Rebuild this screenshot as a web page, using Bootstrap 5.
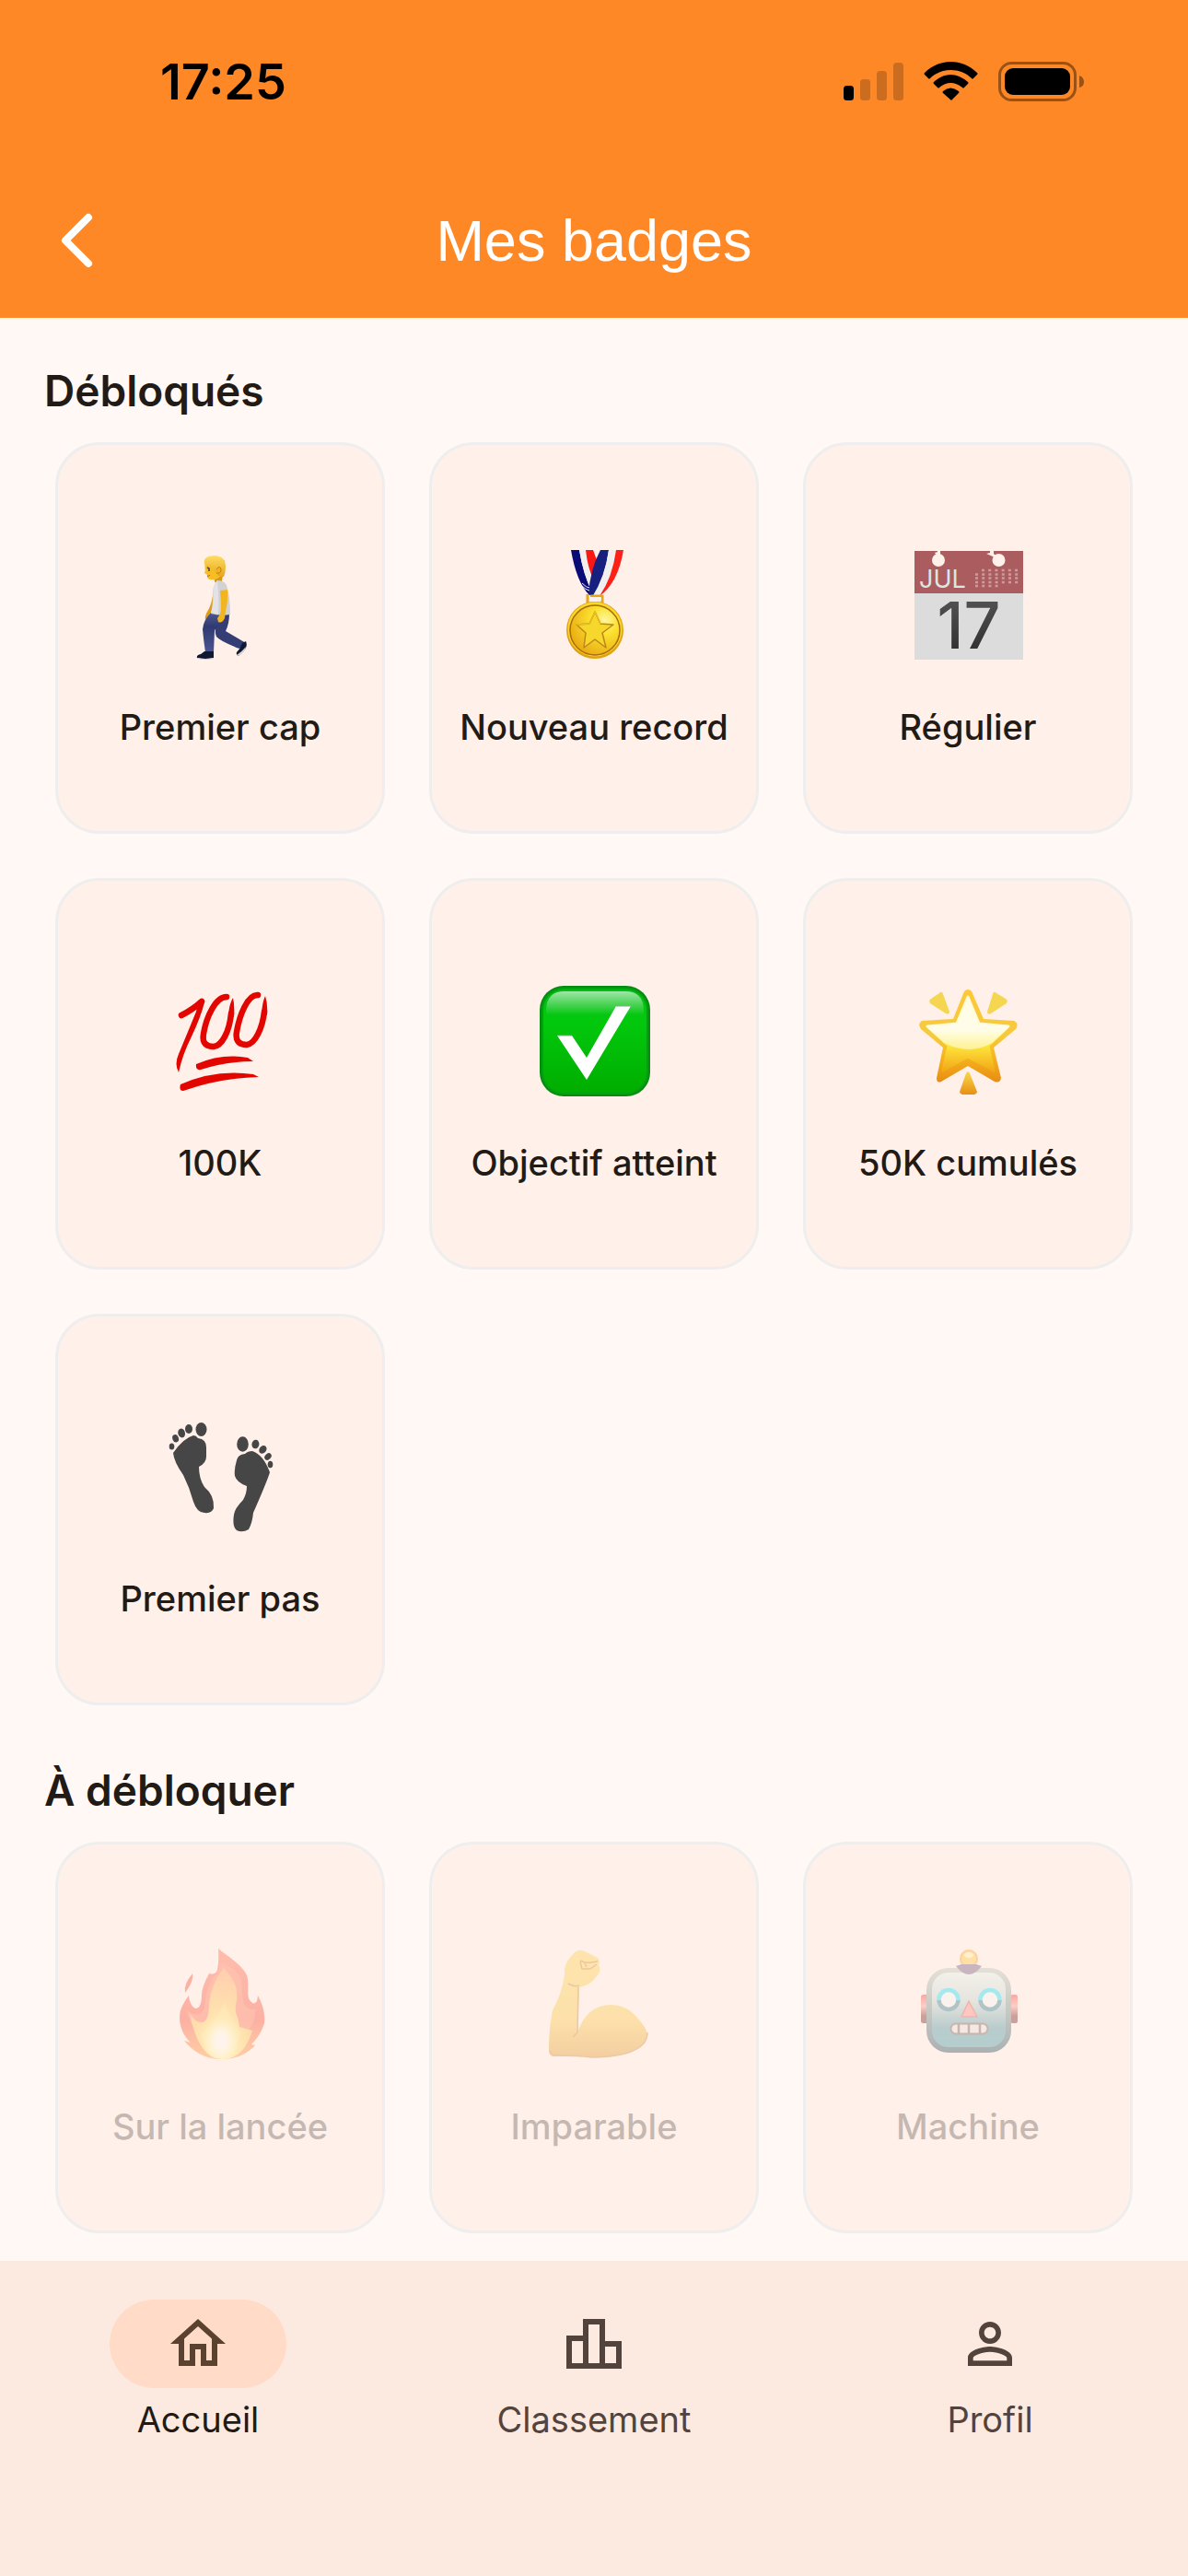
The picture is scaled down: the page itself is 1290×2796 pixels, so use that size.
<!DOCTYPE html>
<html lang="fr">
<head>
<meta charset="utf-8">
<meta name="viewport" content="width=device-width, initial-scale=1">
<title>Mes badges</title>
<link href="https://cdn.jsdelivr.net/npm/bootstrap@5.3.0/dist/css/bootstrap.min.css" rel="stylesheet">
<style>
  body { background: #fff8f5; color: #221a14; font-family: Inter, "Liberation Sans", sans-serif; }
  .top-zone { background: #ff8826; }
  .status-row { height: 177px; padding: 0 112px 0 174px; }
  .clock { font-size: 54px; font-weight: 600; line-height: 60px; color: #000; }
  .app-row { height: 168px; display: grid; grid-template-columns: 168px 1fr 168px; align-items: center; }
  .app-title { font-family: "Liberation Sans", sans-serif; font-size: 63px; font-weight: 400; line-height: 84px; color: #fff; }
  .back-btn { width: 168px; height: 168px; }
  .badge-section { padding: 51px 60px 0; }
  .badge-section + .badge-section { padding-top: 64px; }
  .section-title { font-size: 46px; font-weight: 600; line-height: 56px; margin: 0 0 28px -12px; }
  .badge-grid { --bs-gutter-x: 48px; --bs-gutter-y: 48px; }
  .badge-tile { aspect-ratio: 358 / 425; background: #fff0e9; border: 3px solid #eee; border-radius: 48px; padding-top: 114px; gap: 48px; }
  .badge-tile svg { width: 120px; height: 120px; overflow: visible; flex: none; }
  .badge-label { font-size: 38px; font-weight: 500; line-height: 48px; white-space: nowrap; }
  .locked svg { opacity: .38; }
  .locked .badge-label { opacity: .26; }
  .tab-bar { background: #fceae1; height: 342px; padding-top: 42px; }
  .tab-link { color: #52443c; font-size: 38px; font-weight: 400; line-height: 48px; gap: 10px; }
  .tab-link.active { color: #221a14; }
  .tab-pill { width: 192px; height: 96px; border-radius: 48px; }
  .active .tab-pill { background: #ffdbc8; color: #5b4130; }
  .tab-pill svg { width: 72px; height: 72px; fill: currentColor; }
</style>
</head>
<body class="d-flex flex-column min-vh-100">

<header class="top-zone">
  <div class="status-row d-flex justify-content-between align-items-center">
    <span class="clock">17:25</span>
    <svg width="266" height="46" viewBox="0 0 266 46" aria-hidden="true">
      <rect x="4" y="27" width="11" height="16" rx="3.500"/>
      <g fill-opacity=".2"><rect x="22" y="20" width="11" height="23" rx="3.500"/><rect x="40" y="11" width="11" height="32" rx="3.500"/><rect x="58" y="2" width="11" height="41" rx="3.500"/></g>
      <path d="M92 13C108-3 133-3 149 13q1 1 0 2l-4 4q-1 1-2 0C131 7 110 7 98 19q-1 1-2 0l-4-4q-1-1 0-2ZM102 23q18-16 37 0 1 1 0 2l-4 4q-1 1-2 0-13-10-25 0-1 1-2 0l-4-4q-1-1 0-2ZM112 33q8-7 17 0 1 1 0 2l-8 8-9-8q-1-1 0-2Z"/>
      <rect x="173.500" y="2.500" width="82" height="40" rx="13" fill="none" stroke="#000" stroke-opacity=".4" stroke-width="3"/>
      <rect x="179" y="8" width="71" height="29" rx="9"/>
      <path d="M260 16q5 2 5 7t-5 6Z" fill-opacity=".4"/>
    </svg>
  </div>
  <div class="app-row">
    <button type="button" class="back-btn btn border-0 p-0" aria-label="Retour">
      <svg width="168" height="168" viewBox="0 0 168 168" fill="none" stroke="#fff" stroke-width="8" stroke-linecap="round" stroke-linejoin="round" aria-hidden="true"><path d="M96 59 71 84 96 109"/></svg>
    </button>
    <h1 class="app-title text-center mb-0">Mes badges</h1>
  </div>
</header>

<main class="flex-grow-1">
  <section class="badge-section">
    <h2 class="section-title">Débloqués</h2>
    <div class="row row-cols-3 badge-grid">
      <div class="col"><div class="badge-tile d-flex flex-column align-items-center">
        <svg viewBox="0 0 120 120" aria-hidden="true">
          <defs>
            <linearGradient id="jean" x1="0" x2="0" y1="0" y2="1"><stop stop-color="#4c5a93"/><stop offset=".35" stop-color="#303a70"/><stop offset="1" stop-color="#4c5590"/></linearGradient>
            <linearGradient id="hair" x1="0" x2="0" y1="0" y2="1"><stop stop-color="#ffdd61"/><stop offset="1" stop-color="#e5a51a"/></linearGradient>
          </defs>
          <path d="M52 50q-2 11-6 17-3 5-2 9l3-1q4-9 8-14Z" fill="#e29c12"/>
          <path d="M55 69 70 69Q70 80 66 88L88 101 81 107Q60 99 56 94 53 86 57 78Z" fill="#343e74"/>
          <path d="M50 68 63 69Q60 81 54 87L53 111 44 111Q42 98 41 86 42 76 50 68Z" fill="url(#jean)"/>
          <path d="M43 110h10v7q-9 2-18 0-1-3 4-4ZM84 101l4-2q2 5-1 9l-7 7q-3-1-2-4 4-4 6-10Z" fill="#101934"/>
          <path d="M35 117q9 2 18 0v1q-9 2-18 0ZM88 105q-1 6-8 10l-2-1q6-4 10-9Z" fill="#d9d4cf"/>
          <path d="M54 27h9l-1 7q-5 5-8 0Z" fill="#d59a12"/>
          <path d="M57 33q7 0 10 5 4 13 4 32-10 2-21-1 2-8 2-17-1-13 5-19Z" fill="#d2d2d5"/>
          <path d="M57 33q-6 8-4 18-1 11-3 17l8 2q1-20-1-37Z" fill="#e3e3e6"/>
          <path d="M60 44l8-1q1 12-2 23l-1 8q-3 6-7 4l-1-4q3-3 4-9 0-12-1-21Z" fill="#f3b51d"/>
          <path d="M44 13q-1 6 0 9l-1 3 3 2q-1 4 3 5 4 1 8-1l8-6V11Z" fill="#f8bd25"/>
          <path d="M43 15Q41 6 55 6q11 1 11 12 0 6-2 11l-6-1-6-8q-2-4-5-4-3 1-4-1Z" fill="url(#hair)"/>
          <path d="M56 21q4-5 5 0 0 5-5 4" fill="#f2b221" stroke="#bc810e" stroke-width="1"/><path d="m46 19 2 1v3" fill="none" stroke="#40484e" stroke-width="1.600"/><path d="M46 28q2 1 3-1" fill="none" stroke="#a66811"/>
        </svg>
        <span class="badge-label">Premier cap</span></div></div>

      <div class="col"><div class="badge-tile d-flex flex-column align-items-center">
        <svg viewBox="0 0 120 120" aria-hidden="true">
          <defs><radialGradient id="gold" cx=".7" cy=".3" r=".8"><stop stop-color="#fff6a0"/><stop offset=".35" stop-color="#fbe22f"/><stop offset="1" stop-color="#e8a712"/></radialGradient></defs>
          <path d="M35 0h9q4 26 14 46l-3 3Q41 35 35 0Z" fill="#0b0b78"/><path d="M44 0h7q4 22 12 34l-5 12Q48 25 44 0Z" fill="#f1f0ee"/><path d="M51 0h8q3 10 8 18l-6 18Q53 20 51 0Z" fill="#fb1714"/>
          <path d="M67 0h9q-4 30-17 51l-5-3Q56 20 67 0Z" fill="#18207f"/><path d="M76 0h8q-4 33-19 51h-7Q72 29 76 0Z" fill="#f1f0ee"/><path d="M84 0h8Q86 36 66 50 80 30 84 0Z" fill="#fc2019"/>
          <path d="M47 36q5 5 8 5M47 39q4 4 8 5" fill="none" stroke="#f5f3ef" stroke-width="1"/>
          <path d="M53 48v10h16V50H56" fill="none" stroke="#e6a51a" stroke-width="3"/><rect x="56" y="51" width="12" height="4" rx="1" fill="#fff0e9"/>
          <circle cx="61" cy="87" r="31" fill="#e1a116"/><circle cx="61" cy="86" r="29.500" fill="#f8d928"/><circle cx="61" cy="87" r="27" fill="url(#gold)" stroke="#a96a10" stroke-width="1.500"/>
          <path d="m61 67 6 13 14 1-12 9 4 16-12-9-12 9 2-16-10-9 14-1Z" fill="#f6d72b" stroke="#bf861a" stroke-width="1.500" stroke-linejoin="round"/>
          <path d="m41 81 14-1 6-13 6 13" fill="none" stroke="#e9bd24" stroke-width="1.500"/>
        </svg>
        <span class="badge-label">Nouveau record</span></div></div>

      <div class="col"><div class="badge-tile d-flex flex-column align-items-center">
        <svg viewBox="0 0 120 120" aria-hidden="true">
          <defs><linearGradient id="ink" x1="0" x2="0" y1="0" y2="1"><stop stop-color="#5a5a5a"/><stop offset="1" stop-color="#292929"/></linearGradient></defs>
          <path d="M2 1h118v118H2Z" fill="#dcdcdc"/><path d="M2 1h118v46H2Z" fill="#ab5c5e"/>
          <g fill="#fff0e9"><circle cx="28" cy="11" r="7"/><circle cx="93.500" cy="11" r="7"/><path d="M27 1h3v5h-4l-2-3 3-1ZM84 1h4v3l4 4-5-1-7-3 4-1Z"/></g>
          <text x="7" y="41" font-size="27" font-weight="400" fill="#dfe4e8">JUL</text>
          <g stroke="#d09a9a" stroke-width="2.500" stroke-dasharray="3 4.200" fill="none"><path d="M75 22h41M68 26.500h48M68 30.500h48M68 35h48M68 39h25"/></g>
          <text x="61" y="107" font-size="70" font-weight="500" text-anchor="middle" fill="url(#ink)">17</text>
        </svg>
        <span class="badge-label">Régulier</span></div></div>

      <div class="col"><div class="badge-tile d-flex flex-column align-items-center">
        <svg viewBox="0 0 120 120" aria-hidden="true">
          <g fill="none" stroke="#e20500" stroke-linecap="round" stroke-linejoin="round">
            <path d="M18 32Q30 26 40 17" stroke-width="6.500"/>
            <path d="M67 12C55 12 45 34 42 52 40 63 46 66 53 66 62 65 70 50 72 30" stroke-width="6.500"/>
            <path d="M101 10C90 9 81 32 78 50 76 61 82 64 89 64 98 63 106 46 108 28" stroke-width="6.500"/>
          </g>
          <path d="M36 16q7-4 7 2Q39 34 29 55 19 75 15 94 10 85 15 74 25 50 34 28ZM69 32q1-13 5-19 2 9 1 21ZM105 30q1-13 4-19 3 9 2 21ZM34 85q28-12 56-7l6 4q-30 0-57 9-6 1-5-6ZM17 107q38-17 79-11l6 3q-42 1-82 15-5 0-3-7Z" fill="#e20500"/>
        </svg>
        <span class="badge-label">100K</span></div></div>

      <div class="col"><div class="badge-tile d-flex flex-column align-items-center">
        <svg viewBox="0 0 120 120" aria-hidden="true">
          <defs>
            <linearGradient id="green" x1="0" x2="0" y1="0" y2="1"><stop stop-color="#02bd16"/><stop offset=".3" stop-color="#02c90d"/><stop offset="1" stop-color="#00ad00"/></linearGradient>
            <linearGradient id="gloss" x1="0" x2="0" y1="0" y2="1"><stop stop-color="#fff" stop-opacity=".62"/><stop offset="1" stop-color="#fff" stop-opacity="0"/></linearGradient>
          </defs>
          <rect x="1" width="120" height="120" rx="26" fill="#078c12"/><rect x="3" y="2" width="116" height="116" rx="24" fill="#04a010"/><rect x="5" y="4" width="112" height="112" rx="22" fill="url(#green)"/>
          <path d="M8 32V27Q8 6 28 6H94q20 0 20 21v5Z" fill="url(#gloss)"/>
          <path d="M20 54h16l16 24 32-56h16L52 102Z" fill="#fff"/><path d="M20 54h16M84 22h16" stroke="#8dab8d" stroke-width="1"/>
        </svg>
        <span class="badge-label">Objectif atteint</span></div></div>

      <div class="col"><div class="badge-tile d-flex flex-column align-items-center">
        <svg viewBox="0 0 120 120" aria-hidden="true">
          <defs>
            <linearGradient id="sun" x1="0" x2="0" y1="0" y2="1"><stop stop-color="#ffc735"/><stop offset=".5" stop-color="#f5ca3f"/><stop offset=".7" stop-color="#f7b820"/><stop offset="1" stop-color="#e88d12"/></linearGradient>
            <linearGradient id="core" x1="0" x2="0" y1="0" y2="1"><stop stop-color="#fff9cd"/><stop offset=".45" stop-color="#fffbd8"/><stop offset=".65" stop-color="#fde83f"/><stop offset="1" stop-color="#f3a916"/></linearGradient>
            <linearGradient id="ray" x1="0" x2="0" y1="0" y2="1"><stop stop-color="#f9d94a"/><stop offset="1" stop-color="#e88f14"/></linearGradient>
          </defs>
          <path d="M56 6q4-4 8 0L77 36l33 2q6 3 2 9L88 67l8 33q-1 6-7 4L60 87 31 104q-5 2-5-4l7-33L9 47q-4-6 1-9l34-2Z" fill="url(#sun)"/>
          <path d="M60 12 72 41l32 3L82 65l6 27L60 77 33 92l6-27L16 44l32-3Z" fill="url(#core)" stroke="url(#core)" stroke-width="3" stroke-linejoin="round"/>
          <path d="M60 12 72 41l32 3-18 18Q62 76 34 62L16 44l32-3Z" fill="#fffff5" fill-opacity=".55"/>
          <path d="M29 8q3-3 4 1l7 19q0 4-4 2L19 19q-2-3 1-5ZM91 8q-3-3-4 1l-6 19q0 4 4 2l17-11q2-3-1-5Z" fill="#f4d650"/>
          <path d="M58 95q2-4 4 0l8 20q0 2-3 3H54q-3-1-3-3Z" fill="url(#ray)"/>
        </svg>
        <span class="badge-label">50K cumulés</span></div></div>

      <div class="col"><div class="badge-tile d-flex flex-column align-items-center">
        <svg viewBox="0 0 120 120" fill="#464646" aria-hidden="true">
          <path d="M9 34Q20 18 31 15q3 0 5 3 9 1 9 10V38q0 7-8 11 0 13 6 22 11 9 10 23-2 6-10 5-8 0-12-12Q27 72 20 58 10 44 9 34Z"/>
          <ellipse cx="39.500" cy="8.500" rx="6" ry="7.500"/><ellipse cx="26" cy="8" rx="4" ry="5"/><ellipse cx="18" cy="12.500" rx="3.800" ry="5" transform="rotate(-15 18 12)"/><ellipse cx="11.500" cy="18.500" rx="3.300" ry="4.200" transform="rotate(-20 11 18)"/><ellipse cx="7.500" cy="27" rx="2.800" ry="3.500"/>
          <path d="M114 55Q107 36 95 32q-5 0-8 3-8 1-9 7-3 10-2 17 2 7 13 11 0 8-4 15-9 9-10 16-2 13 3 17 6 3 13-1 4-7 5-18Q111 65 114 55Z"/>
          <ellipse cx="84.500" cy="24.500" rx="6.300" ry="8.300"/><ellipse cx="98.500" cy="24.500" rx="4" ry="4.800" transform="rotate(10 98 24)"/><ellipse cx="106.500" cy="30" rx="3.700" ry="4.700" transform="rotate(40 106 30)"/><ellipse cx="112" cy="38" rx="3.100" ry="4.200" transform="rotate(45 112 38)"/><ellipse cx="114.500" cy="46.500" rx="2.800" ry="3.800"/>
        </svg>
        <span class="badge-label">Premier pas</span></div></div>
    </div>
  </section>

  <section class="badge-section">
    <h2 class="section-title">À débloquer</h2>
    <div class="row row-cols-3 badge-grid">
      <div class="col"><div class="badge-tile locked d-flex flex-column align-items-center">
        <svg viewBox="0 0 120 120" aria-hidden="true">
          <defs>
            <linearGradient id="blaze" x1="0" x2="0" y1="0" y2="1"><stop stop-color="#ff6a4a"/><stop offset=".65" stop-color="#f84c34"/><stop offset="1" stop-color="#ff9a35"/></linearGradient>
            <radialGradient id="heart" cx=".5" cy=".85" r=".8"><stop stop-color="#fffbe0"/><stop offset=".2" stop-color="#fff07a"/><stop offset=".5" stop-color="#ffc94f"/><stop offset="1" stop-color="#ff9b52"/></radialGradient>
            <radialGradient id="glow"><stop offset=".3" stop-color="#fffdf0"/><stop offset="1" stop-color="#fffbc0" stop-opacity="0"/></radialGradient>
          </defs>
          <path d="M58-1C68 7 84 17 89 28 92 38 89 45 91 53q5 9 9 3l1-6c6 11 8 21 7 30-3 10-8 17-14 23l4 1C87 116 73 119 62 119S36 117 21 99l7 2C18 92 14 78 17 66q4-10 9-16 1 11 7 14 7 0 7-15 0-8 8-23 7 2 9-4 2-9 1-23Z" fill="url(#blaze)"/>
          <path d="M30 26q2 8-8 21-2-9 8-21Z" fill="#f84c34"/>
          <path d="M60 14C74 18 84 28 84 39q-1 13 3 22 5 5 11 4 0 19-12 27l-30 10Q28 92 24 66q12 10 19-2Q44 44 52 31q8-5 8-17Z" fill="#ff7a54" opacity=".7"/>
          <path d="M64 20c12 13 17 24 13 40-1 12 3 12 4 24l14 4Q86 119 62 119 36 118 27 69q6 11 14 10Q48 77 48 60 49 39 64 20Z" fill="url(#heart)"/>
          <path d="M65 57q4 14 18 33l-8 20q-13 14-28 0L39 91q16-12 26-34Z" fill="#fff28a" opacity=".35"/>
          <ellipse cx="61" cy="99" rx="19" ry="24" fill="url(#glow)"/>
        </svg>
        <span class="badge-label">Sur la lancée</span></div></div>

      <div class="col"><div class="badge-tile locked d-flex flex-column align-items-center">
        <svg viewBox="0 0 120 120" aria-hidden="true">
          <defs><linearGradient id="skin" x1="0" x2="0" y1="0" y2="1"><stop stop-color="#ffd34c"/><stop offset=".65" stop-color="#fac846"/><stop offset="1" stop-color="#e09a2c"/></linearGradient></defs>
          <path d="M39 3q5-4 11-1l14 7q3 3 1 8 3 5 0 9-6 9-12 12-5 2-9 3L42 90Q52 61 77 60q18 0 29 13 12 12 12 21-2 11-25 19-20 6-47 3-17-2-28 0-6 1-7-6 0-25 4-44Q25 48 28 28 27 18 33 10Z" fill="url(#skin)"/>
          <path d="M45 12q6 3 12 2l7-1M45 13l2 8h9l7-5M50 15l2 4M32 37q7 4 12 2M43 41l-1 49-5 5" fill="none" stroke="#cb872a" stroke-width="1.500" stroke-linejoin="round"/>
          <path d="M12 110q2 5 8 5 22 0 37 2 43 0 57-15 4-6 4-12" fill="none" stroke="#d08a30" stroke-width="1.500"/>
        </svg>
        <span class="badge-label">Imparable</span></div></div>

      <div class="col"><div class="badge-tile locked d-flex flex-column align-items-center">
        <svg viewBox="0 0 120 120" aria-hidden="true">
          <defs>
            <linearGradient id="shell" x1="0" x2="0" y1="0" y2="1"><stop stop-color="#bbc8bc"/><stop offset="1" stop-color="#214e58"/></linearGradient>
            <linearGradient id="face" x1="0" x2="0" y1="0" y2="1"><stop stop-color="#e0f3eb"/><stop offset=".4" stop-color="#bcd0cc"/><stop offset=".75" stop-color="#4792a0"/><stop offset="1" stop-color="#3f98a6"/></linearGradient>
            <linearGradient id="ear" x1="0" x2="0" y1="0" y2="1"><stop stop-color="#f8322c"/><stop offset=".4" stop-color="#f79990"/><stop offset=".75" stop-color="#75201c"/></linearGradient>
            <linearGradient id="ring" x1="0" x2="0" y1="0" y2="1"><stop offset=".5" stop-color="#12e0f5"/><stop offset=".5" stop-color="#327d92"/></linearGradient>
          </defs>
          <rect x="9" y="49" width="9" height="31" rx="2.500" fill="url(#ear)"/><rect x="106" y="49" width="8" height="31" rx="2.500" fill="url(#ear)"/>
          <rect x="15" y="20" width="92" height="92" rx="24" fill="url(#shell)"/><rect x="21" y="25" width="80" height="81" rx="18" fill="url(#face)"/>
          <circle cx="61" cy="10" r="10" fill="#ff9a1c"/><circle cx="61" cy="10" r="8" fill="#ffc83c"/><ellipse cx="61" cy="6" rx="5" ry="3" fill="#fff2b4"/>
          <path d="M47 18 53 16H69l6 2q-14 18-28 0Z" fill="#73577f"/>
          <g fill="#f7f5f4" stroke="url(#ring)" stroke-width="4.500"><circle cx="39" cy="54.500" r="10.500"/><circle cx="84" cy="54.500" r="10.500"/></g>
          <path d="M61 56 70 73H53Z" fill="#ff8580" stroke="#d85550" stroke-width="1.500" stroke-linejoin="round"/>
          <rect x="41.500" y="80.500" width="40" height="11" rx="5.500" fill="#e6ddda" stroke="#6d5650" stroke-width="2"/><path d="M50 80v12M61 80v12M73 80v12" stroke="#6d5650" stroke-width="2.500"/>
        </svg>
        <span class="badge-label">Machine</span></div></div>
    </div>
  </section>
</main>

<nav class="tab-bar sticky-bottom row row-cols-3 g-0 align-items-start" aria-label="Navigation principale">
  <a href="#accueil" class="tab-link active col d-flex flex-column align-items-center text-decoration-none" aria-current="page">
    <span class="tab-pill d-flex align-items-center justify-content-center"><svg viewBox="0 0 24 24" aria-hidden="true"><path d="M12 5.690l5 4.500V18h-2v-6H9v6H7v-7.810l5-4.500M12 3L2 12h3v8h6v-6h2v6h6v-8h3L12 3z"/></svg></span>
    <span>Accueil</span></a>
  <a href="#classement" class="tab-link col d-flex flex-column align-items-center text-decoration-none">
    <span class="tab-pill d-flex align-items-center justify-content-center"><svg viewBox="0 0 24 24" aria-hidden="true"><path d="M16 11V3H8v6H2v12h20V11h-6zm-6-6h4v14h-4V5zm-6 6h4v8H4v-8zm16 8h-4v-6h4v6z"/></svg></span>
    <span>Classement</span></a>
  <a href="#profil" class="tab-link col d-flex flex-column align-items-center text-decoration-none">
    <span class="tab-pill d-flex align-items-center justify-content-center"><svg viewBox="0 0 24 24" aria-hidden="true"><path d="M12 5.900c1.160 0 2.100.94 2.100 2.100s-.94 2.100-2.100 2.100S9.900 9.160 9.900 8s.94-2.100 2.100-2.100m0 9c2.970 0 6.100 1.460 6.100 2.100v1.100H5.900V17c0-.64 3.130-2.100 6.100-2.100M12 4C9.790 4 8 5.790 8 8s1.790 4 4 4 4-1.790 4-4-1.790-4-4-4zm0 9c-2.670 0-8 1.340-8 4v3h16v-3c0-2.660-5.330-4-8-4z"/></svg></span>
    <span>Profil</span></a>
</nav>

<script src="https://cdn.jsdelivr.net/npm/bootstrap@5.3.0/dist/js/bootstrap.bundle.min.js"></script>
</body>
</html>
